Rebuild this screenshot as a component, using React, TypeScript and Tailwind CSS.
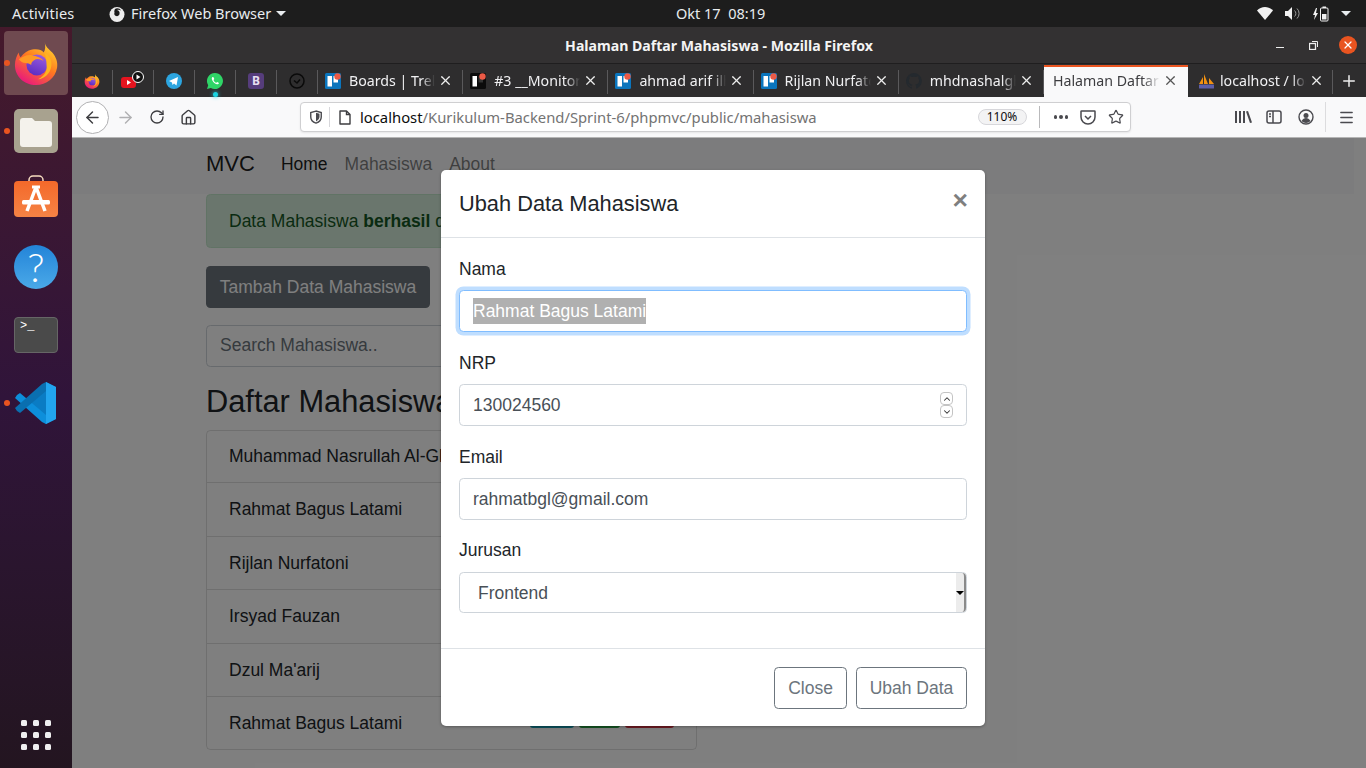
import { ArrowLeft, ArrowRight, RotateCw, House, X, Plus, Menu, Star, ChevronUp, ChevronDown } from "lucide-react";
import type { ReactNode } from "react";

const chromeFont = "font-['Noto_Sans',sans-serif]";
const pageFont = "font-['Liberation_Sans',sans-serif]";

function FirefoxLogo({ id, size }: { id: string; size: number }) {
  return (
    <svg width={size} height={size} viewBox="0 0 48 48">
      <defs>
        <linearGradient id={`${id}a`} x1="0.8" y1="0.05" x2="0.2" y2="0.95">
          <stop offset="0" stopColor="#ffd02e" />
          <stop offset="0.45" stopColor="#ff7a1f" />
          <stop offset="1" stopColor="#e8167f" />
        </linearGradient>
        <linearGradient id={`${id}b`} x1="0.7" y1="0" x2="0.3" y2="1">
          <stop offset="0" stopColor="#9a5ce0" />
          <stop offset="1" stopColor="#5a2cc0" />
        </linearGradient>
      </defs>
      <path d="M33 2c1 5 4 7 8 11 4 5 6 10 5 16-2 11-11 18-22 18C12 47 2 38 2 26c0-5 2-10 4-13 0 2 1 4 2 5 3-4 7-7 12-8 5-1 10 0 12 3 2-3 2-7 1-11z" fill={`url(#${id}a)`} />
      <circle cx="25" cy="26" r="11" fill={`url(#${id}b)`} />
      <path d="M6 20c5-3 9-5 14-4 6 1 10 3 12 6-3-2-7-3-10-1-2 1-3 3-3 5-1-1-4-2-6-2-3 0-5-2-7-4z" fill="#ff9a24" />
      <path d="M33 13c5 3 8 8 7 14-1 8-7 13-14 14 6-3 10-8 9-15 0-5-1-9-2-13z" fill="#ffb31f" />
    </svg>
  );
}

function Trello({ dark }: { dark?: boolean }) {
  return (
    <svg width="16" height="16" viewBox="0 0 16 16" className="shrink-0">
      <rect width="16" height="16" rx="1.5" fill={dark ? "#0b0b0b" : "#0a75bd"} />
      <rect x="2.5" y="3" width="4.5" height="10.5" fill="#fff" />
      <rect x="8.5" y="3" width="4.5" height="6.5" fill={dark ? "#333" : "#fff"} />
      <circle cx="12.5" cy="3.5" r="3.2" fill="#eb5a46" />
    </svg>
  );
}

function GithubMark() {
  return (
    <svg width="16" height="16" viewBox="0 0 16 16" className="shrink-0" fill="#24292e">
      <path d="M8 0a8 8 0 0 0-2.500 15.600c.4.100.5-.2.5-.4v-1.400c-2.200.5-2.700-1-2.700-1-.4-.9-.9-1.200-.9-1.200-.7-.5.100-.5.100-.5.8.100 1.200.8 1.200.8.7 1.200 1.900.9 2.300.7.100-.5.3-.9.5-1.100-1.800-.2-3.600-.9-3.600-4 0-.9.3-1.600.8-2.100-.1-.2-.4-1 .1-2.100 0 0 .7-.2 2.200.8a7.600 7.600 0 0 1 4 0c1.500-1 2.200-.8 2.200-.8.4 1.100.2 1.900.1 2.100.5.6.8 1.300.8 2.100 0 3.100-1.900 3.700-3.700 3.900.3.3.6.800.6 1.500v2.200c0 .2.100.5.600.4A8 8 0 0 0 8 0z" />
    </svg>
  );
}

function PmaSails() {
  return (
    <svg width="17" height="16" viewBox="0 0 17 16" className="shrink-0">
      <path d="M1 11 5 4v7zM6 11V1l4 10zM11 11V5l5 6z" fill="#f29111" />
      <rect x="1" y="11.500" width="15" height="4" rx="0.500" fill="#5d5fa8" />
    </svg>
  );
}

type TabInfo = { title: string; icon: ReactNode };

const tabs: TabInfo[] = [
  { title: "Boards | Trello", icon: <Trello /> },
  { title: "#3 __Monitoring", icon: <Trello dark /> },
  { title: "ahmad arif ilham", icon: <Trello /> },
  { title: "Rijlan Nurfatoni", icon: <Trello /> },
  { title: "mhdnashalghifari", icon: <GithubMark /> },
];

function TabTitle({ title, active }: { title: string; active?: boolean }) {
  return (
    <span className={`-mr-[5px] flex-1 overflow-hidden whitespace-nowrap text-[14.200px] [mask-image:linear-gradient(to_right,black_84%,transparent)] ${active ? "text-[#3d3d40]" : "text-[#f0f0f2]"}`}>
      {title}
    </span>
  );
}

function Tab({ title, icon }: TabInfo) {
  return (
    <div className="relative flex h-full w-[145.200px] items-center gap-[8px] pl-[7px] pr-[10px]">
      {icon}
      <TabTitle title={title} />
      <X size={15} strokeWidth={2} className="shrink-0 text-[#eeeeee]" />
      <span className="absolute right-0 top-[6px] h-[24px] w-px bg-[#5a595b]" />
    </div>
  );
}

function Pinned({ children, dot }: { children: ReactNode; dot?: boolean }) {
  return (
    <div className="relative flex h-full w-[41px] items-center justify-center pr-[1px]">
      {children}
      {dot && <span className="absolute bottom-[0px] left-[18px] h-[5px] w-[5px] rounded-full bg-[#19d3e0] shadow-[0_0_4px_#19d3e0]" />}
      <span className="absolute right-0 top-[6px] h-[24px] w-px bg-[#5a595b]" />
    </div>
  );
}

function TopBar() {
  return (
    <div className={`relative flex h-[27px] shrink-0 items-center bg-[#1d1d1d] text-[14.500px] text-[#e8ecef] ${chromeFont}`}>
      <span className="ml-[12px] w-[97px] tracking-[0.2px]">Activities</span>
      <svg width="16" height="16" viewBox="0 0 16 16">
        <circle cx="8" cy="8.500" r="7.500" fill="#eee" />
        <path d="M6 3c2-1.500 5-.5 6 1.500-1.500-1-3-1-4-.5 2 .5 3 2 2.500 4-.4 1.600-2 2.500-3.500 2-1.400-.5-2.200-2-1.500-3.300C5 5.500 5.500 4 6 3z" fill="#1d1d1d" />
      </svg>
      <span className="ml-[6px]">Firefox Web Browser</span>
      <span className="ml-[5px] h-0 w-0 border-x-[5px] border-t-[5px] border-x-transparent border-t-[#e8ecef]" />
      <span className="absolute left-[676px]">Okt 17&nbsp;&nbsp;08:19</span>
      <div className="ml-auto mr-[15px] flex items-center gap-[12px]">
        <svg width="16" height="13" viewBox="0 0 16 13" fill="#f2f2f2"><path d="M0 3.500C2 1.500 5 0 8 0s6 1.500 8 3.500L8 13z" /></svg>
        <svg width="16" height="13" viewBox="0 0 16 13"><path d="M0 4h3l4-4v13L3 9H0z" fill="#f2f2f2" /><path d="M9.500 3.500a4 4 0 0 1 0 6M12 1.500a7 7 0 0 1 0 10" stroke="#9a9a9a" fill="none" /></svg>
        <svg width="16" height="16" viewBox="0 0 16 16"><path d="M3 2 0 9h2l-1 5 4-7H3l1-5z" fill="#f2f2f2" /><rect x="7.500" y="2" width="7.500" height="13" rx="1" fill="none" stroke="#f2f2f2" /><rect x="9.500" y="0.500" width="3.500" height="1.500" fill="#f2f2f2" /><rect x="9" y="8" width="4.500" height="5.500" fill="#f2f2f2" /></svg>
        <span className="h-0 w-0 border-x-[5px] border-t-[5px] border-x-transparent border-t-[#e8ecef]" />
      </div>
    </div>
  );
}

function DockSlot({ children, running }: { children: ReactNode; running?: boolean }) {
  return (
    <div className="relative flex h-[68px] w-full items-center justify-center">
      {running && <span className="absolute left-[4px] top-[31px] h-[6px] w-[6px] rounded-full bg-[#e95420]" />}
      {children}
    </div>
  );
}

function Dock() {
  return (
    <div className="flex w-[72px] shrink-0 flex-col bg-gradient-to-b from-[#45192b] via-[#30143a] to-[#231520] pt-[2px]">
      <DockSlot running>
        <div className="flex h-[64px] w-[64px] items-center justify-center rounded-[4px] bg-[#6f4a50]">
          <FirefoxLogo id="dock" size={46} />
        </div>
      </DockSlot>
      <DockSlot running>
        <svg width="44" height="44" viewBox="0 0 44 44">
          <rect width="44" height="44" rx="5" fill="#a8a28f" />
          <path d="M6 12a3 3 0 0 1 3-3h9l3 3h14a3 3 0 0 1 3 3v20a3 3 0 0 1-3 3H9a3 3 0 0 1-3-3z" fill="#f4f2ec" />
        </svg>
      </DockSlot>
      <DockSlot>
        <svg width="44" height="44" viewBox="0 0 44 44" className="-mt-[4px]">
          <defs>
            <linearGradient id="bag" x1="0" y1="0" x2="0" y2="1">
              <stop offset="0" stopColor="#f4692a" />
              <stop offset="1" stopColor="#f58345" />
            </linearGradient>
          </defs>
          <path d="M15 8V5a4 4 0 0 1 4-4h6a4 4 0 0 1 4 4v3" fill="none" stroke="#f6dcc0" strokeWidth="1.500" />
          <rect y="6" width="44" height="36" rx="4" fill="url(#bag)" />
          <path d="M22 12 13 36M22 12l9 24" stroke="#fff" strokeWidth="3.500" fill="none" />
          <path d="M18 12h8" stroke="#fff" strokeWidth="3" />
          <rect x="8" y="25" width="28" height="4.500" rx="1.500" fill="#fff" />
        </svg>
      </DockSlot>
      <DockSlot>
        <div className="flex h-[44px] w-[44px] items-center justify-center rounded-full bg-gradient-to-b from-[#2284d8] to-[#4aa9e8] font-['Lato',sans-serif] text-[40px] font-light leading-none text-white">?</div>
      </DockSlot>
      <DockSlot>
        <div className="relative h-[36px] w-[44px] rounded-[4px] border border-[#666] bg-[#4a4a4a]">
          <span className="absolute left-[5px] top-[1px] font-['Liberation_Mono',monospace] text-[12px] leading-[14px] text-white">&gt;_</span>
        </div>
      </DockSlot>
      <DockSlot running>
        <svg width="44" height="44" viewBox="0 0 44 44">
          <path d="M32 1 42 6v32l-10 5-20-19 20-15z" fill="#0a7cc4" />
          <path d="M32 1 42 6v32l-10 5z" fill="#22a5ef" />
          <path d="M3 14 6 12l26 22v9l-4-2L1 17z" fill="#0d8fdb" />
          <path d="M3 30 6 32 32 10V1l-4 2L1 27z" fill="#0a6fb0" />
        </svg>
      </DockSlot>
      <div className="mt-auto mb-[18px] grid grid-cols-3 justify-items-center gap-[6px] self-center">
        {Array.from({ length: 9 }).map((_, i) => (
          <span key={i} className="h-[6px] w-[6px] rounded-[1.500px] bg-[#f0f0f0]" />
        ))}
      </div>
    </div>
  );
}

function TabBar() {
  return (
    <div className={`flex h-[34px] shrink-0 items-stretch border-t border-[#1f1e1f] bg-[#2e2d2e] ${chromeFont}`}>
      <Pinned><FirefoxLogo id="tab" size={16} /></Pinned>
      <Pinned>
        <svg width="26" height="22" viewBox="0 0 26 22">
          <rect x="1" y="7" width="15" height="11" rx="3" fill="#e5141f" />
          <path d="M7 10v5l4-2.500z" fill="#fff" />
          <circle cx="18" cy="7" r="5.500" fill="#111" stroke="#fff" strokeWidth="1" />
          <path d="M16.500 4.500v5l4-2.500z" fill="#fff" />
        </svg>
      </Pinned>
      <Pinned>
        <svg width="16" height="16" viewBox="0 0 16 16"><circle cx="8" cy="8" r="8" fill="#2ca5e0" /><path d="m3 8 9-4-1.500 8.500L8 10.500 6.500 12 6 9.500z" fill="#fff" /></svg>
      </Pinned>
      <Pinned dot>
        <svg width="16" height="16" viewBox="0 0 16 16"><path d="M8 0a8 8 0 0 0-6.800 12.200L0 16l3.900-1.100A8 8 0 1 0 8 0z" fill="#2fd567" /><path d="M5.500 4c-1 .8-1 2 0 3.800 1 1.800 2.500 3 4.300 3.500 1 .2 2-.4 2.200-1.400l-1.800-1-.9.900C8 9.500 7 8.500 6.500 7l.8-1-1-2z" fill="#fff" /></svg>
      </Pinned>
      <Pinned>
        <div className="flex h-[16px] w-[16px] items-center justify-center rounded-[3px] bg-[#563d7c] text-[12px] font-bold text-[#e6dff0]">B</div>
      </Pinned>
      <Pinned>
        <svg width="16" height="16" viewBox="0 0 16 16" fill="none" stroke="#0a0a0a" strokeWidth="1.500"><circle cx="8" cy="8" r="7" /><path d="m5 7.500 3 2.500 3-3.500" /></svg>
      </Pinned>
      {tabs.map((t) => (
        <Tab key={t.title} {...t} />
      ))}
      <div className="mt-[1px] flex w-[144px] items-center gap-[8px] border-t-2 border-[#e95420] bg-[#f9f9fa] pb-[3px] pl-[9px] pr-[10px]">
        <TabTitle title="Halaman Daftar Mahasiswa" active />
        <X size={15} strokeWidth={2} className="shrink-0 text-[#555]" />
      </div>
      <div className="relative flex w-[145px] items-center gap-[5px] pl-[10px] pr-[9px]">
        <PmaSails />
        <TabTitle title="localhost / localhost" />
        <X size={15} strokeWidth={2} className="ml-[3px] shrink-0 text-[#eeeeee]" />
        <span className="absolute right-0 top-[6px] h-[24px] w-px bg-[#5a595b]" />
      </div>
      <div className="flex flex-1 items-center justify-center">
        <Plus size={18} strokeWidth={2} className="text-[#eeeeee]" />
      </div>
    </div>
  );
}

function NavBar() {
  return (
    <div className={`flex h-[41px] shrink-0 items-center border-b border-[#b5b5b5] bg-[#f9f9fa] text-[#3d3d40] ${chromeFont}`}>
      <div className="ml-[4px] flex h-[33px] w-[33px] items-center justify-center rounded-full border border-[#b1b1b3] bg-white">
        <ArrowLeft size={19} strokeWidth={1.800} />
      </div>
      <ArrowRight size={19} strokeWidth={1.800} className="ml-[7px] text-[#b0b0b2]" />
      <RotateCw size={16} strokeWidth={2} className="ml-[14px]" />
      <House size={17} strokeWidth={2} className="ml-[15px]" />
      <div className="ml-[103px] flex h-[30px] w-[831px] items-center rounded-[4px] border border-[#cfcfd1] bg-white shadow-[0_1px_2px_rgba(0,0,0,0.08)]">
        <svg width="14" height="14" viewBox="0 0 16 16" fill="none" stroke="#4a4a4f" strokeWidth="1.600" className="ml-[8px]"><path d="M8 1.200 2 3v5c0 3.500 3 6 6 7 3-1 6-3.500 6-7V3z" /><path d="M8 3v10c2-1 4-2.800 4-5V4.300z" fill="#4a4a4f" stroke="none" /></svg>
        <span className="ml-[6px] h-[20px] w-px bg-[#d7d7db]" />
        <svg width="14" height="15" viewBox="0 0 14 15" fill="none" stroke="#3d3d40" strokeWidth="1.400" className="ml-[8px]"><path d="M2 1h6.500L12 4.500V14H2z" strokeLinejoin="round" /><path d="M8.500 1v3.500H12" /></svg>
        <div className="ml-[8px] whitespace-nowrap text-[14.800px]">
          <span className="text-[#0c0c0d]">localhost</span>
          <span className="text-[#737373]">/Kurikulum-Backend/Sprint-6/phpmvc/public/mahasiswa</span>
        </div>
        <span className="ml-auto flex h-[16px] w-[49px] items-center justify-center rounded-full border border-[#d7d7db] bg-[#f3f3f4] text-[12px] text-[#0c0c0d]">110%</span>
        <span className="ml-[12px] h-[22px] w-px bg-[#b9b9bb]" />
        <div className="ml-[14px] flex gap-[2px]">
          <span className="h-[3.500px] w-[3.500px] rounded-full bg-[#4a4a4f]" />
          <span className="h-[3.500px] w-[3.500px] rounded-full bg-[#4a4a4f]" />
          <span className="h-[3.500px] w-[3.500px] rounded-full bg-[#4a4a4f]" />
        </div>
        <svg width="16" height="15" viewBox="0 0 16 15" fill="none" stroke="#4a4a4f" strokeWidth="1.500" className="ml-[12px]"><path d="M1.500 1h13a.5.5 0 0 1 .5.5V7a7 7 0 0 1-14 0V1.500a.5.5 0 0 1 .5-.5z" /><path d="m5 6 3 3 3-3" /></svg>
        <Star size={16} strokeWidth={1.800} className="ml-[12px] mr-[6px] text-[#4a4a4f]" />
      </div>
      <svg width="17" height="14" viewBox="0 0 17 14" fill="#4a4a4f" className="ml-[104px]"><rect y="1" width="2" height="12" /><rect x="4" y="1" width="2" height="12" /><rect x="8" y="1" width="2" height="12" /><path d="m11 1.500 2-.5 4 11.500-2 .5z" /></svg>
      <svg width="16" height="14" viewBox="0 0 16 14" fill="none" stroke="#4a4a4f" strokeWidth="1.500" className="ml-[14px]"><rect x="1" y="1" width="14" height="12" rx="2" /><path d="M7 1v12M3 4h2M3 6.500h2" /></svg>
      <svg width="16" height="16" viewBox="0 0 16 16" className="ml-[16px]"><circle cx="8" cy="8" r="7" fill="none" stroke="#4a4a4f" strokeWidth="1.400" /><circle cx="8" cy="6.500" r="2.500" fill="#4a4a4f" /><path d="M3.500 12c1-2 3-3 4.500-3s3.500 1 4.500 3a6 6 0 0 1-9 0z" fill="#4a4a4f" /></svg>
      <span className="ml-[11px] h-[30px] w-px bg-[#dcdcde]" />
      <Menu size={17} strokeWidth={2} className="ml-[12px] text-[#4a4a4f]" />
    </div>
  );
}

const students = [
  "Muhammad Nasrullah Al-Ghifari",
  "Rahmat Bagus Latami",
  "Rijlan Nurfatoni",
  "Irsyad Fauzan",
  "Dzul Ma'arij",
  "Rahmat Bagus Latami",
];

function PageContent() {
  return (
    <div className={`h-full bg-white pr-[12px] text-[17.500px] text-[#212529] ${pageFont}`}>
      <div className="flex h-[56px] items-center bg-[#f8f9fa] pb-[4px] pl-[134px]">
        <span className="-mt-[1px] text-[22px] text-black/90">MVC</span>
        <span className="ml-[26px] text-black/90">Home</span>
        <span className="ml-[17px] text-black/50">Mahasiswa</span>
        <span className="ml-[17px] text-black/50">About</span>
      </div>
      <div className="ml-[134px] w-[491px]">
        <div className="flex h-[54px] items-center whitespace-nowrap rounded-[4.400px] border border-[#c3e6cb] bg-[#d4edda] px-[22px] text-[#155724]">
          <span>Data Mahasiswa <b>berhasil</b> diubah</span>
        </div>
        <div className="mt-[18px] flex h-[41.600px] w-[224px] items-center justify-center rounded-[4.400px] bg-[#6c757d] text-white">Tambah Data Mahasiswa</div>
        <div className="mt-[17.400px] flex h-[41.600px] items-center rounded-[4.400px] border border-[#ced4da] px-[13px] pb-[1px] text-[#6c757d]">Search Mahasiswa..</div>
        <h3 className="mt-[14px] h-[42px] text-[30.800px] leading-[42px]">Daftar Mahasiswa</h3>
        <div className="mt-[7.400px] h-[320px] overflow-hidden rounded-[4.400px] border border-[#00000020]">
          {students.map((name, i) => (
            <div key={i} className="flex h-[53.400px] items-center justify-between border-b border-[#00000020] px-[22px] first:-mt-px last:border-b-0">
              <span className="whitespace-nowrap">{name}</span>
              <div className="-mt-[17px] flex h-[26px] gap-[5px]">
                <span className="w-[44px] rounded-[3px] bg-[#17a2b8]" />
                <span className="w-[41px] rounded-[3px] bg-[#28a745]" />
                <span className="w-[49px] rounded-[3px] bg-[#dc3545]" />
              </div>
            </div>
          ))}
        </div>
      </div>
    </div>
  );
}

function Field({ label, children }: { label: string; children: ReactNode }) {
  return (
    <div className="mb-[17.800px]">
      <label className="mb-[8px] block h-[26.400px] leading-[26.400px] text-[#212529]">{label}</label>
      {children}
    </div>
  );
}

const inputClass = "block h-[41.600px] w-full rounded-[4.400px] border border-[#ced4da] bg-white px-[13px] pt-[2px] text-[#495057] outline-none";

function EditModal() {
  return (
    <div className="absolute inset-0 bg-black/50">
      <div className={`absolute left-[369px] top-[32px] w-[544px] rounded-[5px] bg-white text-[17.500px] shadow-[0_1px_3px_rgba(0,0,0,0.3)] ${pageFont}`}>
        <div className="relative flex h-[68px] items-center border-b border-[#dee2e6] px-[18px] pt-[2px]">
          <h5 className="text-[21.800px] text-[#212529]">Ubah Data Mahasiswa</h5>
          <span className="absolute right-[17px] top-[12px] text-[26.400px] font-bold leading-[36px] text-[#7f7f7f]">×</span>
        </div>
        <div className="px-[18px] pb-[17px] pt-[18px]">
          <Field label="Nama">
            <div className="flex h-[41.600px] items-center rounded-[4.400px] border border-[#80bdff] bg-white px-[13px] shadow-[0_0_0_3.500px_rgba(0,123,255,0.25)]">
              <span className="bg-[#b0b0b0] text-white">Rahmat Bagus Latami</span>
            </div>
          </Field>
          <Field label="NRP">
            <div className="relative">
              <input readOnly value="130024560" className={inputClass} />
              <div className="absolute right-[14px] top-[8px] flex flex-col text-[#333]">
                <span className="flex h-[13px] w-[13px] items-center justify-center rounded-[4px] border border-[#c4c4c4]"><ChevronUp size={10} strokeWidth={2.500} /></span>
                <span className="flex h-[13px] w-[13px] items-center justify-center rounded-[4px] border border-[#c4c4c4]"><ChevronDown size={10} strokeWidth={2.500} /></span>
              </div>
            </div>
          </Field>
          <Field label="Email">
            <input readOnly value="rahmatbgl@gmail.com" className={inputClass} />
          </Field>
          <Field label="Jurusan">
            <div className="relative flex h-[41.600px] items-center rounded-[4.400px] border border-[#ced4da] bg-white pl-[18px] pt-[2px] text-[#495057]">
              Frontend
              <div className="absolute right-0 top-0 flex h-full w-[10px] items-center justify-center rounded-r-[4px] border-r-2 border-[#8a8a8a] bg-[#ececec]">
                <span className="h-0 w-0 border-x-[4px] border-t-[4px] border-x-transparent border-t-black" />
              </div>
            </div>
          </Field>
        </div>
        <div className="flex justify-end gap-[9px] border-t border-[#dee2e6] px-[18px] pb-[17.500px] pt-[18px]">
          <span className="flex h-[41.600px] w-[73px] items-center justify-center rounded-[4.400px] border border-[#6c757d] text-[#6c757d]">Close</span>
          <span className="flex h-[41.600px] w-[111px] items-center justify-center rounded-[4.400px] border border-[#6c757d] text-[#6c757d]">Ubah Data</span>
        </div>
      </div>
    </div>
  );
}

export default function App() {
  return (
    <div className="relative flex h-[768px] w-[1366px] flex-col overflow-hidden">
      <TopBar />
      <div className="flex min-h-0 flex-1">
        <Dock />
        <div className="flex min-w-0 flex-1 flex-col">
          <div className={`relative flex h-[36px] shrink-0 items-center justify-center bg-[#333132] pt-[1px] text-[14.100px] font-bold text-[#f4f4f4] ${chromeFont}`}>
            Halaman Daftar Mahasiswa - Mozilla Firefox
            <span className="absolute left-[1204px] top-[20px] h-px w-[8px] bg-[#eee]" />
            <svg width="9" height="9" viewBox="0 0 9 9" fill="none" stroke="#eee" className="absolute left-[1237px] top-[14px]"><rect x="0.500" y="2.500" width="6" height="6" strokeWidth="1.300" /><path d="M3 .5h5.500V6" /></svg>
            <span className="absolute left-[1267px] top-[9px] flex h-[18px] w-[18px] items-center justify-center rounded-full bg-[#e95420]"><X size={12} strokeWidth={2.500} className="text-white" /></span>
          </div>
          <TabBar />
          <NavBar />
          <div className="relative min-h-0 flex-1 overflow-hidden">
            <PageContent />
            <EditModal />
          </div>
        </div>
      </div>
    </div>
  );
}
